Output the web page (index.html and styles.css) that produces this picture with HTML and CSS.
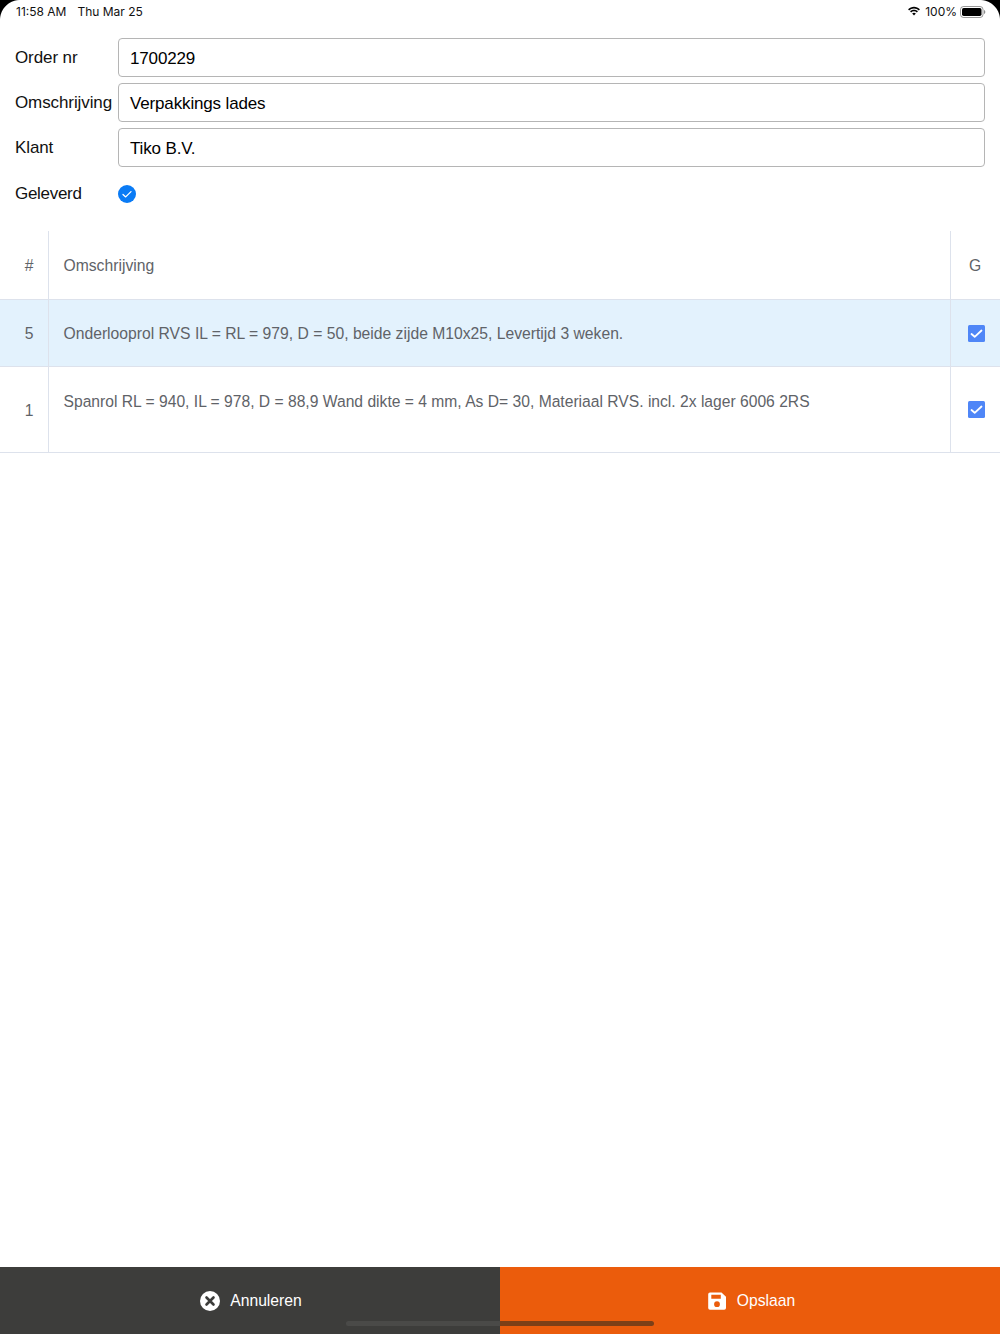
FILE: index.html
```html
<!DOCTYPE html>
<html lang="nl">
<head>
<meta charset="utf-8">
<title>Order</title>
<link rel="stylesheet" href="styles.css">
</head>
<body>
<div class="app">
  <header class="status">
    <div class="status-left"><span>11:58 AM</span><span>Thu Mar 25</span></div>
    <div class="status-right">
      <svg class="wifi" width="14" height="11" viewBox="0 0 14 11"><path d="M7 2.400c1.900 0 3.600.7 4.900 2l1-1.100C11.300 1.700 9.200.8 7 .8S2.700 1.700 1.100 3.300l1 1.100c1.300-1.300 3-2 4.900-2z"/><path d="M7 5.300c1.100 0 2.100.4 2.900 1.100l1-1.100C9.800 4.300 8.500 3.800 7 3.800s-2.800.5-3.900 1.500l1 1.100c.8-.7 1.800-1.100 2.900-1.100z"/><path d="M7 6.800c-.7 0-1.300.3-1.800.7L7 9.500l1.800-2C8.300 7.100 7.700 6.800 7 6.800z"/></svg>
      <span>100%</span>
      <svg class="battery" width="26" height="12" viewBox="0 0 26 12"><rect x=".5" y=".5" width="22.500" height="11" rx="3" fill="none" stroke="#000" stroke-opacity=".4"/><rect x="2" y="2" width="19.500" height="8" rx="1.700"/><path d="M24 4v4c.8-.3 1.300-1.100 1.300-2s-.5-1.700-1.300-2z" fill-opacity=".45"/></svg>
    </div>
  </header>

  <form class="form">
    <div class="field"><label class="field-label">Order nr</label><div class="input">1700229</div></div>
    <div class="field"><label class="field-label">Omschrijving</label><div class="input">Verpakkings lades</div></div>
    <div class="field"><label class="field-label">Klant</label><div class="input">Tiko B.V.</div></div>
    <div class="field field-check">
      <label class="field-label">Geleverd</label>
      <svg class="round-check" width="18" height="18" viewBox="0 0 18 18"><circle cx="9" cy="9" r="9" fill="#0a7bf5"/><path d="M5 9.400l2.700 2.500L13 6.600" fill="none" stroke="#fff" stroke-width="1.300" stroke-linecap="round" stroke-linejoin="round"/></svg>
    </div>
  </form>

  <section class="table">
    <div class="row row-head">
      <div class="cell cell-num">#</div>
      <div class="cell cell-desc">Omschrijving</div>
      <div class="cell cell-g">G</div>
    </div>
    <div class="row row-selected">
      <div class="cell cell-num">5</div>
      <div class="cell cell-desc">Onderlooprol RVS IL = RL = 979, D = 50, beide zijde M10x25, Levertijd 3 weken.</div>
      <div class="cell cell-g"><svg class="box" width="17" height="17" viewBox="0 0 17 17"><rect width="17" height="17" rx="1.500" fill="#4f86f7"/><path d="M3.500 9l3.200 2.800L13.500 5.500" fill="none" stroke="#fff" stroke-width="1.800" stroke-linecap="round" stroke-linejoin="round"/></svg></div>
    </div>
    <div class="row row-tall">
      <div class="cell cell-num">1</div>
      <div class="cell cell-desc cell-top">Spanrol RL = 940, IL = 978, D = 88,9 Wand dikte = 4 mm, As D= 30, Materiaal RVS. incl. 2x lager 6006 2RS</div>
      <div class="cell cell-g"><svg class="box" width="17" height="17" viewBox="0 0 17 17"><rect width="17" height="17" rx="1.500" fill="#4f86f7"/><path d="M3.500 9l3.200 2.800L13.500 5.500" fill="none" stroke="#fff" stroke-width="1.800" stroke-linecap="round" stroke-linejoin="round"/></svg></div>
    </div>
  </section>

  <footer class="actions">
    <button class="action action-cancel" type="button">
      <svg width="20" height="20" viewBox="0 0 20 20"><circle cx="10" cy="10" r="10" fill="#fff"/><path d="M6.500 6.500l7 7m0-7l-7 7" stroke="#3d3d3b" stroke-width="2.600" stroke-linecap="round"/></svg>
      <span>Annuleren</span>
    </button>
    <button class="action action-save" type="button">
      <svg width="18" height="18" viewBox="0 0 18 18"><path fill-rule="evenodd" d="M2 .5h11.500L18 4.800V16a1.800 1.800 0 0 1-1.800 1.800H2A1.800 1.800 0 0 1 .2 16V2.300A1.800 1.800 0 0 1 2 .5zM3.300 2.800v3.900h9.500V2.800zM9 9.300a2.900 2.900 0 1 0 0 5.800 2.900 2.900 0 0 0 0-5.800z" fill="#fff"/></svg>
      <span>Opslaan</span>
    </button>
  </footer>

  <div class="home-indicator"></div>
  <div class="corner corner-left"></div>
  <div class="corner corner-right"></div>
</div>
</body>
</html>
```
FILE: styles.css
```css
* { box-sizing: border-box; }
html, body { margin: 0; padding: 0; background: #fff; }
body { font-family: "Liberation Sans", Arial, sans-serif; color: #111; }

.app {
  position: relative;
  width: 1000px;
  height: 1334px;
  display: flex;
  flex-direction: column;
  overflow: hidden;
}

.status {
  height: 23px;
  padding: 5px 14px 0 16px;
  display: flex;
  justify-content: space-between;
  font-family: Inter, "Liberation Sans", sans-serif;
  font-size: 12px;
  line-height: 14px;
  color: #111;
}
.status-left { display: flex; gap: 11px; }
.status-right { display: flex; align-items: flex-start; gap: 4px; }
.wifi { margin-top: 1px; }
.battery { margin-top: 1px; margin-left: -1px; }

.form {
  padding: 15px 15px 0;
  display: flex;
  flex-direction: column;
  gap: 6px;
}
.field { display: flex; height: 39px; }
.field-label {
  width: 103px;
  font-size: 17px;
  line-height: 40px;
  letter-spacing: -0.1px;
  flex: none;
  color: #111;
}
.input {
  flex: 1;
  border: 1px solid #b5b5b5;
  border-radius: 4px;
  padding: 2px 11px 0;
  font-size: 17px;
  letter-spacing: -0.15px;
  line-height: 35px;
  color: #000;
}
.field-check { height: 36px; margin-top: 3px; align-items: center; }
.field-check .field-label { line-height: 40px; letter-spacing: -0.3px; }

.table { margin-top: 19px; }
.row { display: flex; border-bottom: 1px solid #dde2ec; color: #5f6368; font-size: 15.7px; }
.row-head { height: 69px; }
.row-selected { height: 67px; background: #e3f2fd; }
.row-tall { height: 86px; font-size: 15.65px; }
.cell { display: flex; align-items: center; }
.cell-num { width: 49px; flex: none; justify-content: center; border-right: 1px solid #dde2ec; padding: 2px 0 0 10px; }
.cell-desc { flex: 1; padding: 2px 0 0 14.5px; }
.cell-top { align-items: flex-start; padding-top: 26px; line-height: 18px; }
.cell-g { width: 50px; flex: none; justify-content: center; border-left: 1px solid #dde2ec; }
.row-head .cell-g { padding: 2px 1px 0 0; }
.box { margin-left: 2px; }

.actions { margin-top: auto; display: flex; height: 67px; }
.action {
  width: 50%;
  flex: none;
  border: 0;
  padding: 0 0 0 2px;
  display: flex;
  align-items: center;
  justify-content: center;
  gap: 10px;
  font-family: "Liberation Sans", Arial, sans-serif;
  font-size: 15.7px;
  color: #fff;
}
.action-cancel { background: #3d3d3b; }
.action-save { background: #eb5c0c; gap: 11px; padding-left: 3px; }

.home-indicator {
  position: absolute;
  left: 346px;
  bottom: 8px;
  width: 308px;
  height: 5px;
  border-radius: 3px;
  background: linear-gradient(to right, #4a4a48 0, #4a4a48 50%, #7c3f17 50%, #7c3f17 100%);
}
.corner {
  position: absolute;
  top: 0;
  width: 20px;
  height: 20px;
}
.corner-left { left: 0; background: radial-gradient(circle at 100% 100%, transparent 19.500px, #000 20.500px); }
.corner-right { right: 0; background: radial-gradient(circle at 0 100%, transparent 19.500px, #000 20.500px); }
```
